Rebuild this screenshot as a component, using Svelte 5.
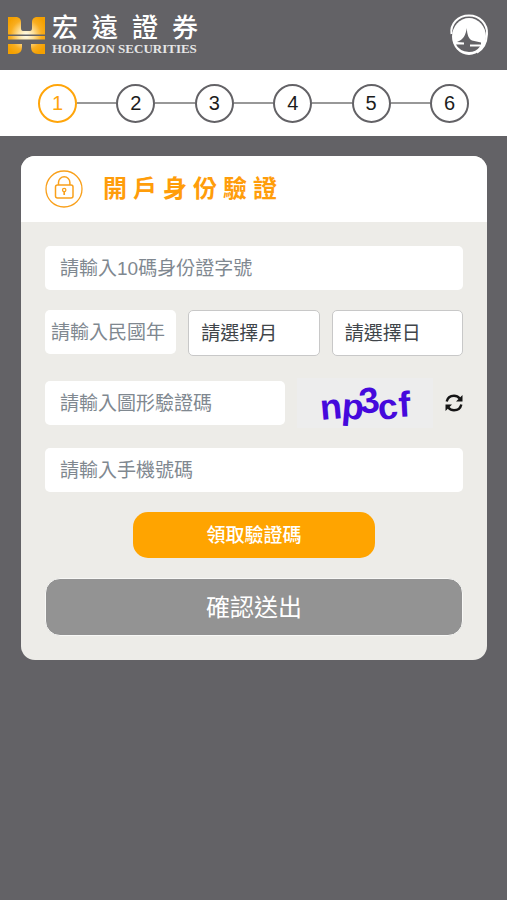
<script lang="ts">
  const steps = [1, 2, 3, 4, 5, 6];
  const months = Array.from({ length: 12 }, (_, i) => i + 1);
  const days = Array.from({ length: 31 }, (_, i) => i + 1);
  let current = $state(1);
</script>

<header class="topbar">
  <a class="brand" href="#home">
    <svg class="mark" viewBox="0 0 37 37" aria-hidden="true">
      <defs>
        <radialGradient id="gold" gradientUnits="userSpaceOnUse" cx="18" cy="18" r="22">
          <stop offset="0" stop-color="#fffdf0" />
          <stop offset="0.35" stop-color="#fde09a" />
          <stop offset="0.7" stop-color="#f9ae20" />
          <stop offset="1" stop-color="#f4a000" />
        </radialGradient>
      </defs>
      <path fill="url(#gold)" d="M0 0H9Q13 1 13 5V11Q13 14 15 14H22Q24 14 24 11V5Q24 1 28 0H37V17.500H0ZM0 19H37V22.500H0ZM0 27H14V30Q14 37 7 37H0ZM37 27H23V30Q23 37 30 37H37Z" />
    </svg>
    <span class="names">
      <span class="zh">宏遠證券</span>
      <span class="en">HORIZON SECURITIES</span>
    </span>
  </a>
  <button class="emblem" type="button" aria-label="首頁">
    <svg viewBox="0 0 40 42" aria-hidden="true">
      <path d="M2.500 20C1 10 9 1.500 20 1.500C31 1.500 38.500 10 38 20C37.500 30 33 36 28 38.500" fill="none" stroke="#fff" stroke-width="2" />
      <ellipse cx="20" cy="22.500" rx="17" ry="18.500" fill="#fff" />
      <path fill="#636266" d="M17.700 14C18.300 21 19.500 24.500 23 26.500L32 28.500V30.500L21 30.500V32.500L31 32.500Q27 38 20 38Q10 37 7 30.500H15V28.500L8 28C14 26 17 21 17.700 14Z" />
    </svg>
  </button>
</header>

<ol class="steps">
  {#each steps as step}
    <li class:active={step === current} aria-current={step === current ? 'step' : undefined}><span>{step}</span></li>
  {/each}
</ol>

<main class="card">
  <div class="title">
    <svg viewBox="0 0 38 38" fill="none" stroke="#f9a01b" aria-hidden="true">
      <circle cx="19" cy="19" r="18" stroke-width="1.300" />
      <rect x="10.500" y="15" width="17.500" height="13" rx="2" stroke-width="1.500" />
      <path d="M13.500 15V12.500a5.700 5.700 0 0 1 11.400 0V15" stroke-width="1.500" />
      <circle cx="19.200" cy="20" r="1.700" stroke-width="1.300" />
      <path d="M19.200 21.500V25" stroke-width="1.700" />
    </svg>
    <h1>開戶身份驗證</h1>
  </div>

  <form onsubmit={(e) => e.preventDefault()}>
    <input type="text" placeholder="請輸入10碼身份證字號" aria-label="身份證字號" />
    <div class="birth">
      <input class="year" type="text" placeholder="請輸入民國年" aria-label="民國年" />
      <select aria-label="月">
        <option value="">請選擇月</option>
        {#each months as m}<option>{m}</option>{/each}
      </select>
      <select aria-label="日">
        <option value="">請選擇日</option>
        {#each days as d}<option>{d}</option>{/each}
      </select>
    </div>
    <div class="captcha">
      <input type="text" placeholder="請輸入圖形驗證碼" aria-label="圖形驗證碼" />
      <svg class="code" viewBox="0 0 136 50">
        <text x="24 44 64 82 102" y="42 40 36 42 39" rotate="-5 5 -8 -6 -3">np3cf</text>
      </svg>
      <button class="refresh" type="button" aria-label="更新驗證碼">
        <svg viewBox="0 0 18 18" aria-hidden="true">
          <g fill="none" stroke="#151515" stroke-width="2.400">
            <path d="M1.700 7.500C2.500 3.800 5.500 1.700 9 1.700C11.500 1.700 13.300 2.800 14.700 4.500" />
            <path d="M16.300 10.500C15.500 14.200 12.500 16.300 9 16.300C6.500 16.300 4.700 15.200 3.300 13.500" />
          </g>
          <path fill="#151515" d="M17.500 1V7.500H11ZM.5 17V10.500H7Z" />
        </svg>
      </button>
    </div>
    <input type="tel" placeholder="請輸入手機號碼" aria-label="手機號碼" />
    <button class="send" type="button">領取驗證碼</button>
    <button class="submit" type="submit">確認送出</button>
  </form>
</main>

<style>
  :global(body) {
    background: #636266;
    font-family: "Liberation Sans", "Noto Sans CJK TC", sans-serif;
  }

  .topbar {
    display: flex;
    align-items: center;
    justify-content: space-between;
    box-sizing: border-box;
    height: 70px;
    padding: 0 18px 0 8px;
  }

  .brand {
    display: flex;
    align-items: center;
    gap: 7px;
    color: #fff;
    text-decoration: none;
  }

  .mark {
    width: 37px;
    height: 37px;
  }

  .names {
    display: flex;
    flex-direction: column;
  }

  .zh {
    font-size: 26px;
    font-weight: 500;
    line-height: 28px;
    letter-spacing: 14px;
  }

  .en {
    color: #e6e6e6;
    font-family: "Liberation Serif", serif;
    font-size: 13px;
    font-weight: 700;
    line-height: 14px;
  }

  button {
    box-sizing: border-box;
    border: 0;
    padding: 0;
    background: none;
    font-family: inherit;
    cursor: pointer;
  }

  .emblem svg {
    display: block;
    width: 40px;
    height: 42px;
  }

  .steps {
    display: flex;
    box-sizing: border-box;
    height: 66px;
    margin: 0;
    padding: 0 38px;
    align-items: center;
    background: #fff;
    list-style: none;
  }

  .steps li {
    display: flex;
    flex: 1;
    align-items: center;
  }

  .steps li:first-child {
    flex: none;
  }

  .steps li:not(:first-child)::before {
    content: "";
    flex: 1;
    height: 2px;
    background: #989898;
  }

  .steps span {
    box-sizing: border-box;
    width: 39px;
    height: 39px;
    border: 2px solid #636266;
    border-radius: 50%;
    color: #1c1c1c;
    font-size: 20px;
    line-height: 35px;
    text-align: center;
  }

  .steps .active span {
    border-color: #ffa50a;
    color: #ffa50a;
  }

  .card {
    margin: 20px 20px 0 21px;
    border-radius: 14px;
    background: #edece8;
    overflow: hidden;
  }

  .title {
    display: flex;
    align-items: center;
    gap: 20px;
    height: 66px;
    padding: 0 24px;
    background: #fff;
  }

  .title svg {
    width: 38px;
    height: 38px;
  }

  h1 {
    margin: 0;
    color: #ff9d0a;
    font-size: 24px;
    font-weight: 700;
    line-height: 36px;
    letter-spacing: 6px;
  }

  form {
    display: flex;
    flex-direction: column;
    padding: 24px;
  }

  input,
  select {
    box-sizing: border-box;
    width: 100%;
    min-width: 0;
    height: 44px;
    border: 0;
    border-radius: 5px;
    padding: 2px 15px 0;
    background: #fff;
    color: #495057;
    font-family: inherit;
    font-size: 19px;
  }

  input::placeholder {
    color: #808890;
    opacity: 1;
  }

  .birth {
    display: grid;
    grid-template-columns: repeat(3, 1fr);
    gap: 12px;
    margin: 20px 0 22px;
  }

  .year {
    padding: 2px 6px 0;
  }

  select {
    height: 46px;
    border: 1px solid #c8c8c8;
    padding: 0 12px;
    color: #40454a;
    appearance: none;
  }

  .captcha {
    display: flex;
    align-items: center;
    gap: 12px;
    margin-bottom: 20px;
  }

  .captcha input {
    flex: 1;
  }

  .code {
    width: 136px;
    height: 50px;
    background: #ededed;
  }

  .code text {
    fill: #4509dc;
    font-family: "Liberation Sans", sans-serif;
    font-size: 36px;
    font-weight: 700;
  }

  .refresh svg {
    display: block;
    width: 18px;
    height: 18px;
  }

  .send {
    align-self: center;
    width: 58%;
    height: 46px;
    margin: 20px 0;
    border-radius: 15px;
    padding-bottom: 4px;
    background: #ffa400;
    color: #fff;
    font-size: 19px;
    font-weight: 500;
  }

  .submit {
    height: 58px;
    border: 1px solid #f8f8f6;
    border-radius: 15px;
    padding-bottom: 4px;
    background: #939393;
    color: #fff;
    font-size: 24px;
  }
</style>
